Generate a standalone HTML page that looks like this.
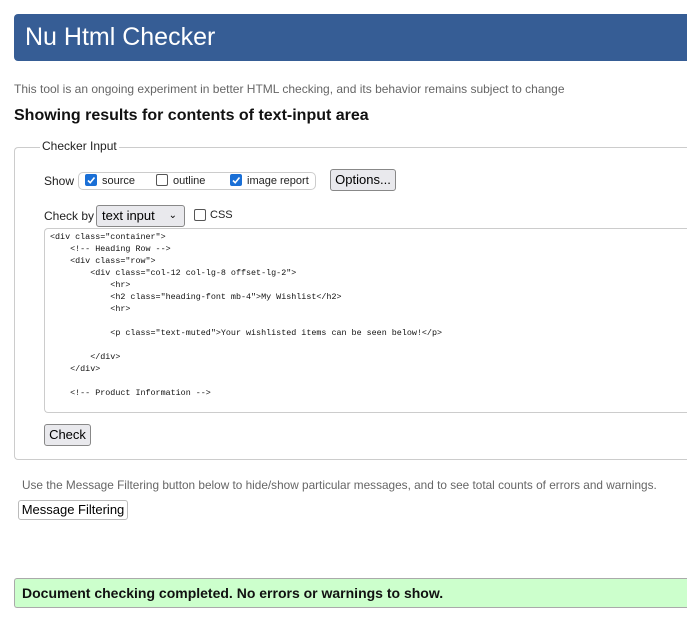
<!DOCTYPE html>
<html><head><style>
body{margin:0;width:687px;height:617px;overflow:hidden;background:#fff;font-family:"Liberation Sans",sans-serif;position:relative}
.a{position:absolute;white-space:nowrap}
.hdr{left:14px;top:14px;width:673px;height:47px;background:#365d95;border-radius:4px 0 0 4px;color:#fff;font-size:25px}
.cb{position:absolute;width:12px;height:12px;border-radius:2px;box-sizing:border-box}
.on{background:#1a6fd6;border:1px solid #1a6fd6}
.off{border:1px solid #555;background:#fff}
.btn{border:1px solid #888;border-radius:3px;background:#e9e9ed;font-size:13px;box-sizing:border-box;text-align:center}
pre{margin:0;font-family:"Liberation Mono",monospace;font-size:8.4px;line-height:12px;color:#111}
</style></head><body>
<div class="a hdr"><span style="position:absolute;left:11px;top:9px">Nu Html Checker</span></div>
<div class="a" style="left:14px;top:82px;font-size:12px;color:#666">This tool is an ongoing experiment in better HTML checking, and its behavior remains subject to change</div>
<div class="a" style="left:14px;top:107px;font-size:16px;font-weight:bold;color:#111">Showing results for contents of text-input area</div>
<div class="a" style="left:14px;top:147px;width:673px;height:313px;border:1px solid #ccc;border-right:none;border-radius:4px 0 0 4px;box-sizing:border-box"></div>
<div class="a" style="left:40px;top:139px;padding:0 2px;background:#fff;font-size:12px;color:#222">Checker Input</div>
<div class="a" style="left:44px;top:174px;font-size:12px;color:#222">Show</div>
<div class="a" style="left:78px;top:172px;width:238px;height:18px;border:1px solid #ccc;border-radius:5px;box-sizing:border-box"></div>
<div class="cb on" style="left:85px;top:174px"><svg width="10" height="10" style="position:absolute;left:0;top:0"><path d="M2 5.5l2.2 2.2L8.5 2.5" stroke="#fff" stroke-width="1.6" fill="none"/></svg></div>
<div class="a" style="left:102px;top:175px;font-size:11px;color:#222">source</div>
<div class="cb off" style="left:156px;top:174px"></div>
<div class="a" style="left:173px;top:175px;font-size:11px;color:#222">outline</div>
<div class="cb on" style="left:230px;top:174px"><svg width="10" height="10" style="position:absolute;left:0;top:0"><path d="M2 5.5l2.2 2.2L8.5 2.5" stroke="#fff" stroke-width="1.6" fill="none"/></svg></div>
<div class="a" style="left:247px;top:175px;font-size:11px;color:#222">image report</div>
<div class="a btn" style="left:330px;top:169px;width:66px;height:22px;line-height:20px">Options...</div>
<div class="a" style="left:44px;top:209px;font-size:12px;color:#222">Check by</div>
<div class="a btn" style="left:96px;top:205px;width:89px;height:22px;line-height:20px;text-align:left;padding-left:5px;font-size:13px">text input<span style="position:absolute;right:7px;top:0;font-size:10px">&#8964;</span></div>
<div class="cb off" style="left:194px;top:209px"></div>
<div class="a" style="left:210px;top:209px;font-size:11px;color:#222">CSS</div>
<div class="a" style="left:44px;top:228px;width:643px;height:185px;border:1px solid #ccc;border-right:none;border-radius:4px 0 0 4px;box-sizing:border-box"></div>
<pre class="a" style="left:50px;top:231px;white-space:pre">&lt;div class="container"&gt;
    &lt;!-- Heading Row --&gt;
    &lt;div class="row"&gt;
        &lt;div class="col-12 col-lg-8 offset-lg-2"&gt;
            &lt;hr&gt;
            &lt;h2 class="heading-font mb-4"&gt;My Wishlist&lt;/h2&gt;
            &lt;hr&gt;

            &lt;p class="text-muted"&gt;Your wishlisted items can be seen below!&lt;/p&gt;

        &lt;/div&gt;
    &lt;/div&gt;

    &lt;!-- Product Information --&gt;</pre>
<div class="a btn" style="left:44px;top:424px;width:47px;height:22px;line-height:20px">Check</div>
<div class="a" style="left:22px;top:478px;font-size:11.8px;color:#666">Use the Message Filtering button below to hide/show particular messages, and to see total counts of errors and warnings.</div>
<div class="a btn" style="left:18px;top:500px;width:110px;height:20px;line-height:18px;background:#fff;border-color:#bbb">Message Filtering</div>
<div class="a" style="left:14px;top:578px;width:673px;height:30px;background:#ccffcc;border:1px solid #aaa;border-right:none;border-radius:3px 0 0 3px;box-sizing:border-box"></div>
<div class="a" style="left:22px;top:585px;font-size:14px;font-weight:bold;color:#111">Document checking completed. No errors or warnings to show.</div>
</body></html>
